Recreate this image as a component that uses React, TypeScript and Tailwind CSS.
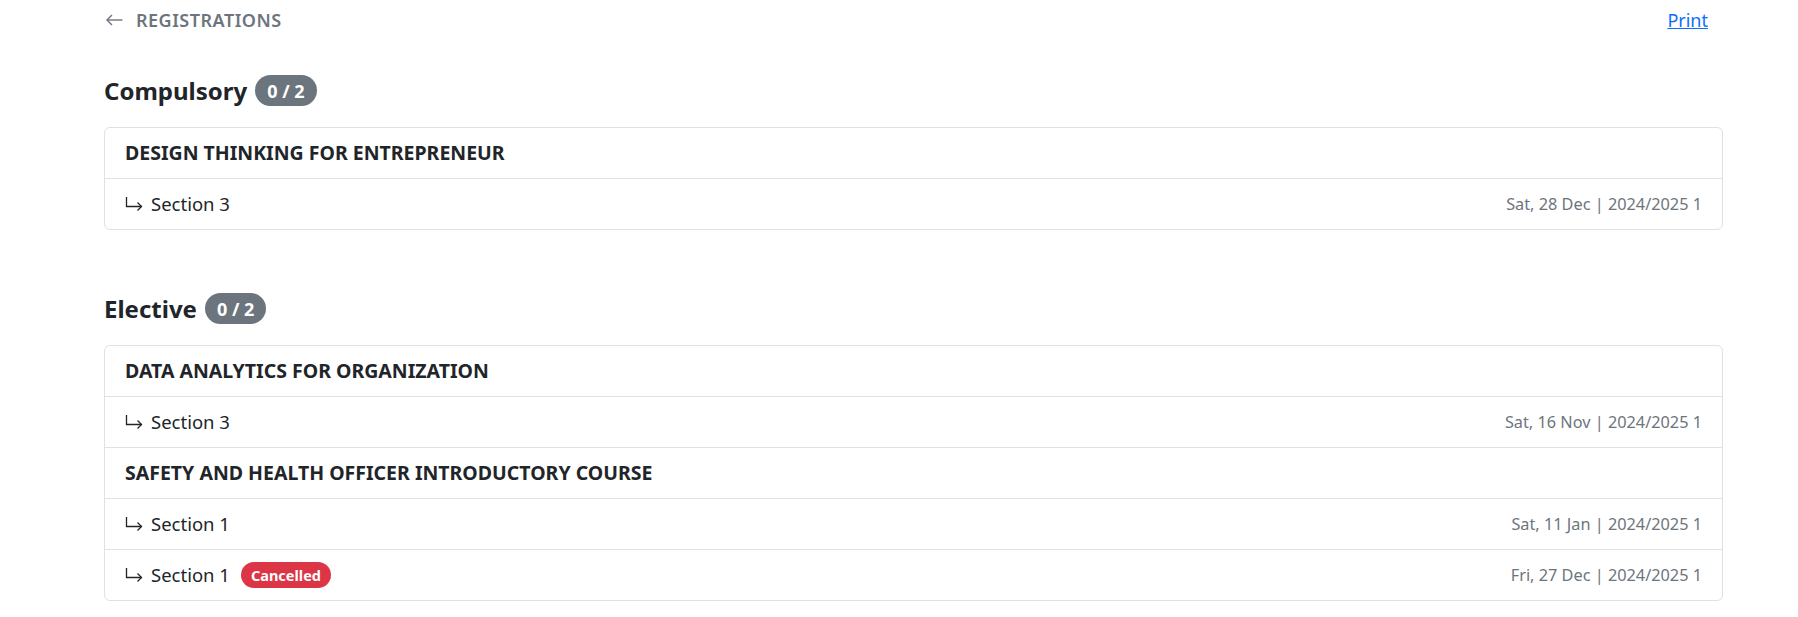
import React from "react";

type Section = { name: string; date: string; cancelled?: boolean };
type Course = { title: string; sections: Section[] };
type Group = { label: string; count: string; courses: Course[] };

const groups: Group[] = [
   {
      label: "Compulsory",
      count: "0 / 2",
      courses: [
         {
            title: "DESIGN THINKING FOR ENTREPRENEUR",
            sections: [{ name: "Section 3", date: "Sat, 28 Dec | 2024/2025 1" }],
         },
      ],
   },
   {
      label: "Elective",
      count: "0 / 2",
      courses: [
         {
            title: "DATA ANALYTICS FOR ORGANIZATION",
            sections: [{ name: "Section 3", date: "Sat, 16 Nov | 2024/2025 1" }],
         },
         {
            title: "SAFETY AND HEALTH OFFICER INTRODUCTORY COURSE",
            sections: [
               { name: "Section 1", date: "Sat, 11 Jan | 2024/2025 1" },
               { name: "Section 1", date: "Fri, 27 Dec | 2024/2025 1", cancelled: true },
            ],
         },
      ],
   },
];

const SubArrow = () => (
   <svg width="18" height="15" viewBox="0 0 18 15" fill="none" stroke="#212529" strokeWidth="1.3">
      <path d="M1.5 0V9.5H16.5" />
      <path d="M12.5 5.5L16.5 9.5L12.5 13.5" />
   </svg>
);

export default function App() {
   return (
      <div
         className="w-full min-h-screen bg-white text-[#212529]"
         style={{ fontFamily: '"Noto Sans", "Open Sans", sans-serif' }}
      >
         <div className="pl-[104px] pr-[75px]">
            <header className="flex items-center justify-between h-[40px] pl-[2px] pr-[15px]">
               <div className="flex items-center gap-[13px] text-[#6c757d] text-[18px] font-semibold tracking-[0.5px] uppercase">
                  <svg width="17" height="12" viewBox="0 0 17 12" fill="none" stroke="#6c757d" strokeWidth="1.4">
                     <path d="M16.5 6H1" />
                     <path d="M6 1L1 6L6 11" />
                  </svg>
                  <span>Registrations</span>
               </div>
               <a href="#" className="text-[#0d6efd] underline text-[18px]">
                  Print
               </a>
            </header>

            {groups.map((g, gi) => (
               <section key={g.label} className={gi === 0 ? "mt-[35px]" : "mt-[63px]"}>
                  <h4 className="flex items-center gap-[8px] h-[31px]">
                     <span className="text-[24px] font-bold leading-none">{g.label}</span>
                     <span className="inline-flex items-center h-[31px] px-[12px] rounded-full bg-[#6c757d] text-white text-[18px] font-bold leading-none">
                        {g.count}
                     </span>
                  </h4>
                  <div className="mt-[21px] border border-[#dee2e6] rounded-[6px]">
                     {g.courses.map((c, ci) => (
                        <div key={c.title}>
                           <div
                              className={`flex items-center h-[50px] px-5 text-[19.5px] font-bold ${
                                 ci > 0 ? "border-t border-[#dee2e6] h-[51px]" : ""
                              }`}
                           >
                              {c.title}
                           </div>
                           {c.sections.map((s, si) => (
                              <div
                                 key={si}
                                 className="flex items-center justify-between h-[51px] px-5 border-t border-[#dee2e6]"
                              >
                                 <div className="flex items-center text-[18.5px]">
                                    <SubArrow />
                                    <span className="ml-[8px]">{s.name}</span>
                                    {s.cancelled && (
                                       <span className="ml-[11px] inline-flex items-center h-[26px] px-[10px] rounded-full bg-[#dc3545] text-white text-[14.5px] font-bold leading-none">
                                          Cancelled
                                       </span>
                                    )}
                                 </div>
                                 <span className="text-[16.3px] text-[#6c757d]">{s.date}</span>
                              </div>
                           ))}
                        </div>
                     ))}
                  </div>
               </section>
            ))}
         </div>
      </div>
   );
}
